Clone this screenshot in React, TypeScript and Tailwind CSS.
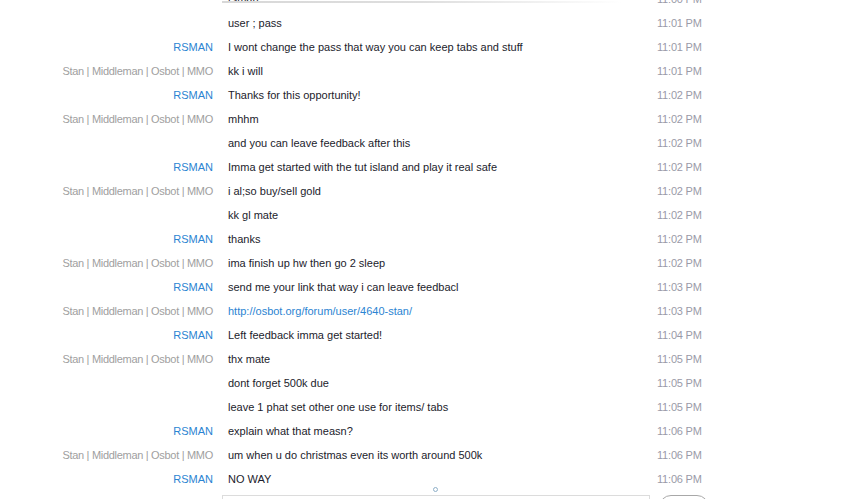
const NAME_STAN = 'Stan | Middleman | Osbot | MMO';

type Msg = { who?: 'rs' | 'stan'; text: string; time: string; link?: boolean };

const MESSAGES: Msg[] = [
  { text: 'rsman', time: '11:00 PM' },
  { text: 'user ; pass', time: '11:01 PM' },
  { who: 'rs', text: 'I wont change the pass that way you can keep tabs and stuff', time: '11:01 PM' },
  { who: 'stan', text: 'kk i will', time: '11:01 PM' },
  { who: 'rs', text: 'Thanks for this opportunity!', time: '11:02 PM' },
  { who: 'stan', text: 'mhhm', time: '11:02 PM' },
  { text: 'and you can leave feedback after this', time: '11:02 PM' },
  { who: 'rs', text: 'Imma get started with the tut island and play it real safe', time: '11:02 PM' },
  { who: 'stan', text: 'i al;so buy/sell gold', time: '11:02 PM' },
  { text: 'kk gl mate', time: '11:02 PM' },
  { who: 'rs', text: 'thanks', time: '11:02 PM' },
  { who: 'stan', text: 'ima finish up hw then go 2 sleep', time: '11:02 PM' },
  { who: 'rs', text: 'send me your link that way i can leave feedbacl', time: '11:03 PM' },
  { who: 'stan', text: 'http://osbot.org/forum/user/4640-stan/', time: '11:03 PM', link: true },
  { who: 'rs', text: 'Left feedback imma get started!', time: '11:04 PM' },
  { who: 'stan', text: 'thx mate', time: '11:05 PM' },
  { text: 'dont forget 500k due', time: '11:05 PM' },
  { text: 'leave 1 phat set other one use for items/ tabs', time: '11:05 PM' },
  { who: 'rs', text: 'explain what that measn?', time: '11:06 PM' },
  { who: 'stan', text: 'um when u do christmas even its worth around 500k', time: '11:06 PM' },
  { who: 'rs', text: 'NO WAY', time: '11:06 PM' },
];

function Row({ msg }: { msg: Msg }) {
  return (
    <div className="flex h-6 items-center whitespace-nowrap">
      <div className="w-[213px] shrink-0 text-right">
        {msg.who === 'rs' && <span className="text-[#2b84d2]">RSMAN</span>}
        {msg.who === 'stan' && <span className="tracking-[-0.3px] text-[#a0a0a0]">{NAME_STAN}</span>}
      </div>
      <div className={`ml-[15px] w-[429px] shrink-0 ${msg.link ? 'text-[#2b84d2]' : 'text-[#1c1c2c]'}`}>
        {msg.text}
      </div>
      <div className="tracking-[-0.2px] text-[#9a9aa8]">{msg.time}</div>
    </div>
  );
}

export default function App() {
  return (
    <div
      className="relative flex h-[499px] w-[844px] flex-col overflow-hidden bg-white text-[11px]"
      style={{ fontFamily: '"Liberation Sans", Arial, sans-serif' }}
    >
      {/* fading edge of the header above the log */}
      <div className="absolute left-[222px] top-[1px] h-[2px] w-[400px] bg-gradient-to-r from-[#d8d8d8] via-[#dedede] to-white" />
      <div className="-mt-[13px] flex flex-col">
        {MESSAGES.map((m, i) => (
          <Row key={i} msg={m} />
        ))}
      </div>
      <div className="flex pl-[433px]">
        <div className="mt-[-4px] h-[5px] w-[5px] rounded-full border border-[#8fb0c8]" />
      </div>
      <div className="mt-[3px] flex gap-[9px] pl-[222px]">
        <div className="h-[20px] w-[428px] border border-[#dcdcdc] bg-white" />
        <div className="h-[24px] w-[50px] rounded-full border border-[#a8a8a8] bg-white" />
      </div>
    </div>
  );
}
